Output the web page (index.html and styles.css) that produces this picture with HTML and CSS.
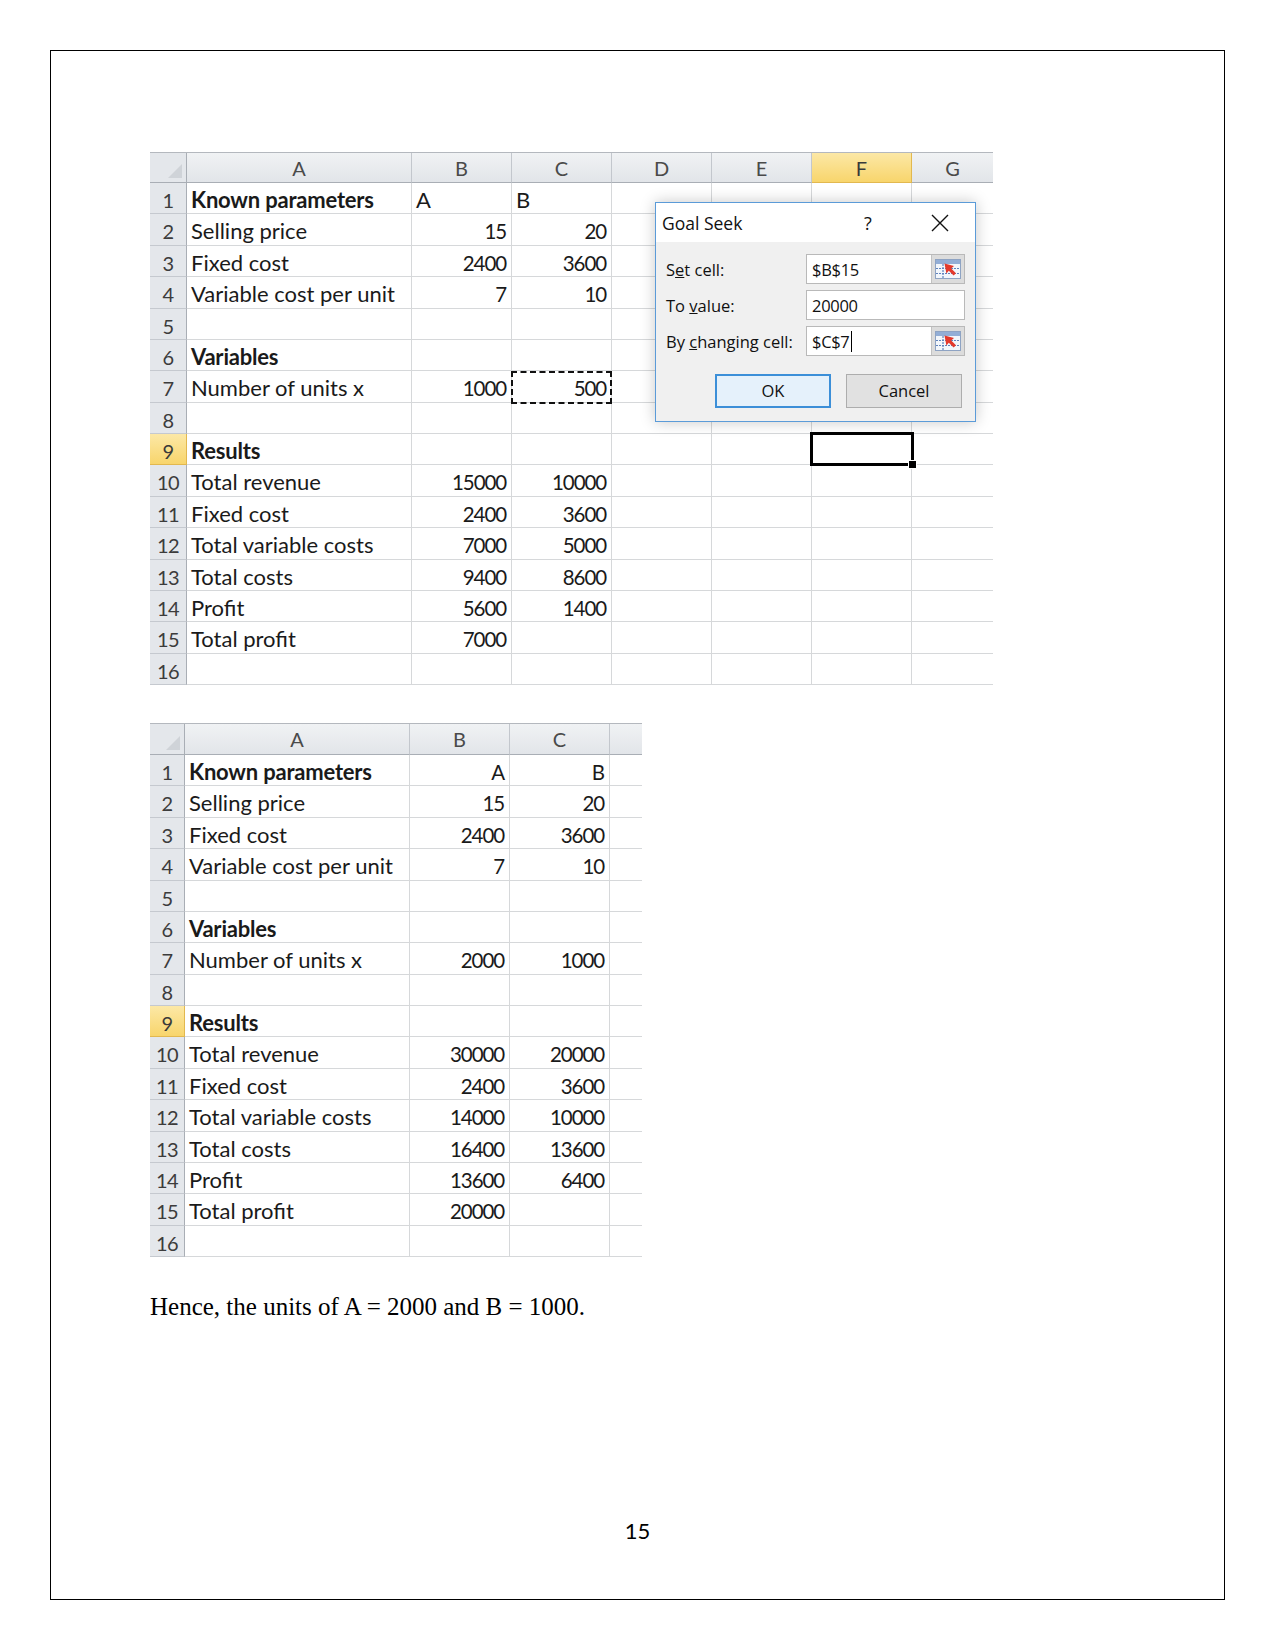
FILE: index.html
```html
<!DOCTYPE html>
<html>
<head>
<meta charset="utf-8">
<link rel="stylesheet" href="styles.css">
</head>
<body>
<div class="page">
  <div class="sheet sheet1">
    <div class="row hdr"><div class="c corner"></div><div class="c ch">A</div><div class="c ch">B</div><div class="c ch">C</div><div class="c ch">D</div><div class="c ch">E</div><div class="c ch sel">F</div><div class="c ch last">G</div></div>
    <div class="row"><div class="c rh">1</div><div class="c b">Known parameters</div><div class="c">A</div><div class="c">B</div><div class="c"></div><div class="c"></div><div class="c"></div><div class="c last"></div></div>
    <div class="row"><div class="c rh">2</div><div class="c">Selling price</div><div class="c num">15</div><div class="c num">20</div><div class="c"></div><div class="c"></div><div class="c"></div><div class="c last"></div></div>
    <div class="row"><div class="c rh">3</div><div class="c">Fixed cost</div><div class="c num">2400</div><div class="c num">3600</div><div class="c"></div><div class="c"></div><div class="c"></div><div class="c last"></div></div>
    <div class="row"><div class="c rh">4</div><div class="c">Variable cost per unit</div><div class="c num">7</div><div class="c num">10</div><div class="c"></div><div class="c"></div><div class="c"></div><div class="c last"></div></div>
    <div class="row"><div class="c rh">5</div><div class="c"></div><div class="c"></div><div class="c"></div><div class="c"></div><div class="c"></div><div class="c"></div><div class="c last"></div></div>
    <div class="row"><div class="c rh">6</div><div class="c b">Variables</div><div class="c"></div><div class="c"></div><div class="c"></div><div class="c"></div><div class="c"></div><div class="c last"></div></div>
    <div class="row"><div class="c rh">7</div><div class="c">Number of units x</div><div class="c num">1000</div><div class="c num">500</div><div class="c"></div><div class="c"></div><div class="c"></div><div class="c last"></div></div>
    <div class="row"><div class="c rh">8</div><div class="c"></div><div class="c"></div><div class="c"></div><div class="c"></div><div class="c"></div><div class="c"></div><div class="c last"></div></div>
    <div class="row"><div class="c rh sel">9</div><div class="c b">Results</div><div class="c"></div><div class="c"></div><div class="c"></div><div class="c"></div><div class="c"></div><div class="c last"></div></div>
    <div class="row"><div class="c rh">10</div><div class="c">Total revenue</div><div class="c num">15000</div><div class="c num">10000</div><div class="c"></div><div class="c"></div><div class="c"></div><div class="c last"></div></div>
    <div class="row"><div class="c rh">11</div><div class="c">Fixed cost</div><div class="c num">2400</div><div class="c num">3600</div><div class="c"></div><div class="c"></div><div class="c"></div><div class="c last"></div></div>
    <div class="row"><div class="c rh">12</div><div class="c">Total variable costs</div><div class="c num">7000</div><div class="c num">5000</div><div class="c"></div><div class="c"></div><div class="c"></div><div class="c last"></div></div>
    <div class="row"><div class="c rh">13</div><div class="c">Total costs</div><div class="c num">9400</div><div class="c num">8600</div><div class="c"></div><div class="c"></div><div class="c"></div><div class="c last"></div></div>
    <div class="row"><div class="c rh">14</div><div class="c">Profit</div><div class="c num">5600</div><div class="c num">1400</div><div class="c"></div><div class="c"></div><div class="c"></div><div class="c last"></div></div>
    <div class="row"><div class="c rh">15</div><div class="c">Total profit</div><div class="c num">7000</div><div class="c"></div><div class="c"></div><div class="c"></div><div class="c"></div><div class="c last"></div></div>
    <div class="row"><div class="c rh">16</div><div class="c"></div><div class="c"></div><div class="c"></div><div class="c"></div><div class="c"></div><div class="c"></div><div class="c last"></div></div>

    <div class="marquee"></div>
    <div class="active-cell"><span class="handle"></span></div>

    <div class="dialog">
      <div class="dlg-title">
        <span class="dlg-name">Goal Seek</span>
        <span class="dlg-help">?</span>
        <svg class="dlg-close" width="18" height="18" viewBox="0 0 18 18"><path d="M1 1 L17 17 M17 1 L1 17" stroke="#111" stroke-width="1.4" fill="none"/></svg>
      </div>
      <div class="dlg-body">
        <div class="field">
          <span class="lbl">S<u>e</u>t cell:</span>
          <div class="inp"><span class="val">$B$15</span>
            <span class="picker"><svg width="28" height="24" viewBox="0 0 28 24"><rect x="1.5" y="2.5" width="25" height="19" fill="#f2f6fb" stroke="#8ea3c3"/><rect x="2" y="3" width="24" height="4" fill="#93aed6"/><path d="M2 11.5 H26 M2 16.5 H26 M9 7 V21" stroke="#5f83bd" stroke-width="1.2" stroke-dasharray="2 1"/><path d="M10.5 6.5 L20 9 L17.2 11.4 L22 16.2 L19.6 18.6 L14.8 13.8 L12.4 16.4 Z" fill="#e3392c"/></svg></span>
          </div>
        </div>
        <div class="field">
          <span class="lbl">To <u>v</u>alue:</span>
          <div class="inp"><span class="val">20000</span></div>
        </div>
        <div class="field">
          <span class="lbl">By <u>c</u>hanging cell:</span>
          <div class="inp"><span class="val">$C$7<span class="caret"></span></span>
            <span class="picker"><svg width="28" height="24" viewBox="0 0 28 24"><rect x="1.5" y="2.5" width="25" height="19" fill="#f2f6fb" stroke="#8ea3c3"/><rect x="2" y="3" width="24" height="4" fill="#93aed6"/><path d="M2 11.5 H26 M2 16.5 H26 M9 7 V21" stroke="#5f83bd" stroke-width="1.2" stroke-dasharray="2 1"/><path d="M10.5 6.5 L20 9 L17.2 11.4 L22 16.2 L19.6 18.6 L14.8 13.8 L12.4 16.4 Z" fill="#e3392c"/></svg></span>
          </div>
        </div>
        <div class="buttons">
          <div class="btn ok">OK</div>
          <div class="btn">Cancel</div>
        </div>
      </div>
    </div>
  </div>

  <div class="sheet sheet2">
    <div class="row hdr"><div class="c corner"></div><div class="c ch">A</div><div class="c ch">B</div><div class="c ch">C</div><div class="c ch last"></div></div>
    <div class="row"><div class="c rh">1</div><div class="c b">Known parameters</div><div class="c num">A</div><div class="c num">B</div><div class="c last"></div></div>
    <div class="row"><div class="c rh">2</div><div class="c">Selling price</div><div class="c num">15</div><div class="c num">20</div><div class="c last"></div></div>
    <div class="row"><div class="c rh">3</div><div class="c">Fixed cost</div><div class="c num">2400</div><div class="c num">3600</div><div class="c last"></div></div>
    <div class="row"><div class="c rh">4</div><div class="c">Variable cost per unit</div><div class="c num">7</div><div class="c num">10</div><div class="c last"></div></div>
    <div class="row"><div class="c rh">5</div><div class="c"></div><div class="c"></div><div class="c"></div><div class="c last"></div></div>
    <div class="row"><div class="c rh">6</div><div class="c b">Variables</div><div class="c"></div><div class="c"></div><div class="c last"></div></div>
    <div class="row"><div class="c rh">7</div><div class="c">Number of units x</div><div class="c num">2000</div><div class="c num">1000</div><div class="c last"></div></div>
    <div class="row"><div class="c rh">8</div><div class="c"></div><div class="c"></div><div class="c"></div><div class="c last"></div></div>
    <div class="row"><div class="c rh sel">9</div><div class="c b">Results</div><div class="c"></div><div class="c"></div><div class="c last"></div></div>
    <div class="row"><div class="c rh">10</div><div class="c">Total revenue</div><div class="c num">30000</div><div class="c num">20000</div><div class="c last"></div></div>
    <div class="row"><div class="c rh">11</div><div class="c">Fixed cost</div><div class="c num">2400</div><div class="c num">3600</div><div class="c last"></div></div>
    <div class="row"><div class="c rh">12</div><div class="c">Total variable costs</div><div class="c num">14000</div><div class="c num">10000</div><div class="c last"></div></div>
    <div class="row"><div class="c rh">13</div><div class="c">Total costs</div><div class="c num">16400</div><div class="c num">13600</div><div class="c last"></div></div>
    <div class="row"><div class="c rh">14</div><div class="c">Profit</div><div class="c num">13600</div><div class="c num">6400</div><div class="c last"></div></div>
    <div class="row"><div class="c rh">15</div><div class="c">Total profit</div><div class="c num">20000</div><div class="c"></div><div class="c last"></div></div>
    <div class="row"><div class="c rh">16</div><div class="c"></div><div class="c"></div><div class="c"></div><div class="c last"></div></div>
  </div>

  <p class="conclusion">Hence, the units of A = 2000 and B = 1000.</p>

  <div class="page-num">15</div>
</div>
</body>
</html>
```

FILE: styles.css
```css
html, body {
  margin: 0;
  padding: 0;
  background: #fff;
}

.page {
  box-sizing: border-box;
  margin: 50px 0 0 50px;
  width: 1175px;
  height: 1550px;
  border: 1px solid #000;
  padding: 101px 0 0 99px;
}

.sheet {
  position: relative;
  font-family: Lato, "Liberation Sans", sans-serif;
  font-size: 22px;
  color: #1a1a1a;
}

.sheet1 {
  width: 843px;
  --cols: 37px 225px 100px 100px 100px 100px 100px 81px;
}

.sheet2 {
  width: 492px;
  margin-top: 38px;
  --cols: 35px 225px 100px 100px 32px;
}

.row {
  display: grid;
  grid-template-columns: var(--cols);
  height: 31.375px;
}

.row.hdr {
  height: 31px;
  box-sizing: border-box;
  border-top: 1px solid #b4b8be;
}

.sheet2 .row.hdr {
  height: 32px;
}

.c {
  box-sizing: border-box;
  border-right: 1px solid #d6d8da;
  border-bottom: 1px solid #d6d8da;
  padding: 1px 4px 0 4px;
  line-height: 31px;
  white-space: nowrap;
  overflow: hidden;
}

.c.last {
  border-right: none;
}

.c.num {
  text-align: right;
  font-size: 20.5px;
  letter-spacing: -1.1px;
  padding-right: 5px;
  padding-top: 2px;
}

.c.b {
  font-weight: 700;
  letter-spacing: -0.2px;
}

.c.rh {
  background: #e4e7eb;
  border-right: 1px solid #a9aeb5;
  border-bottom: 1px solid #c5c9cf;
  text-align: center;
  padding: 2px 0 0 0;
  font-size: 20px;
  letter-spacing: -0.6px;
  color: #3c3c3c;
}

.c.ch {
  background: linear-gradient(#f0f2f4, #e2e5e9);
  border-right: 1px solid #c3c7cd;
  border-bottom: 1px solid #a9aeb5;
  text-align: center;
  padding: 0;
  line-height: 30px;
  font-size: 20px;
  color: #4a4a4a;
}

.c.ch.last {
  border-right: none;
}

.c.corner {
  position: relative;
  background: #e4e7eb;
  border-right: 1px solid #a9aeb5;
  border-bottom: 1px solid #a9aeb5;
}

.c.corner::after {
  content: "";
  position: absolute;
  right: 4px;
  bottom: 4px;
  width: 14px;
  height: 14px;
  background: #cfd3d8;
  clip-path: polygon(100% 0, 100% 100%, 0 100%);
}

.c.sel {
  background: linear-gradient(#fce8a6, #f8d56c);
  border-right-color: #e2b84f;
  border-bottom-color: #e2b84f;
  color: #3a3a3a;
}

.marquee {
  position: absolute;
  left: 361px;
  top: 219px;
  width: 101px;
  height: 33px;
  box-sizing: border-box;
  border: 2px dashed #111;
}

.active-cell {
  position: absolute;
  left: 660px;
  top: 280px;
  width: 104px;
  height: 34px;
  box-sizing: border-box;
  border: 3px solid #000;
}

.active-cell .handle {
  position: absolute;
  right: -6px;
  bottom: -6px;
  width: 7px;
  height: 7px;
  background: #000;
  border: 1px solid #fff;
}

.dialog {
  position: absolute;
  left: 505px;
  top: 50px;
  width: 321px;
  box-sizing: border-box;
  border: 1px solid #5b9bd8;
  background: #f0f0f0;
  box-shadow: 0 0 14px rgba(0, 0, 0, 0.22);
  font-family: "Open Sans", "Noto Sans", sans-serif;
  font-size: 17px;
  color: #111;
}

.dlg-title {
  display: flex;
  align-items: center;
  height: 39px;
  background: #fff;
  padding: 0 0 0 6px;
}

.dlg-name {
  font-size: 17.5px;
  flex: 1;
}

.dlg-help {
  font-size: 18px;
  width: 20px;
  margin-right: 47px;
}

.dlg-close {
  margin-right: 26px;
}

.dlg-body {
  padding: 12px 10px 13px 9px;
}

.field {
  display: grid;
  grid-template-columns: 141px 159px;
  align-items: center;
  height: 30px;
  margin-bottom: 6px;
}

.field:nth-child(3) {
  margin-bottom: 0;
}

.lbl {
  padding-left: 1px;
  font-size: 16.5px;
}

.inp {
  display: flex;
  align-items: center;
  box-sizing: border-box;
  height: 30px;
  background: #fff;
  border: 1px solid #b9b9b9;
}

.val {
  flex: 1;
  padding-left: 5px;
  font-size: 16.5px;
  letter-spacing: -0.3px;
  display: flex;
  align-items: center;
}

.caret {
  display: inline-block;
  width: 1px;
  height: 21px;
  margin-left: 1px;
  background: #000;
}

.picker {
  display: flex;
  align-items: center;
  justify-content: center;
  width: 33px;
  height: 100%;
  box-sizing: border-box;
  background: #dcdcdc;
  border-left: 1px solid #c2c2c2;
}

.buttons {
  display: flex;
  justify-content: flex-end;
  gap: 15px;
  margin-top: 18px;
  padding-right: 3px;
}

.btn {
  box-sizing: border-box;
  width: 116px;
  height: 34px;
  line-height: 32px;
  text-align: center;
  background: #e1e1e1;
  border: 1px solid #adadad;
  font-size: 16.5px;
}

.btn.ok {
  background: #e5f1fb;
  border: 2px solid #3c8fd8;
  line-height: 30px;
}

.conclusion {
  margin: 36px 0 0 0;
  font-family: "Liberation Serif", "Times New Roman", serif;
  font-size: 25px;
  color: #000;
}

.page-num {
  margin: 196px 0 0 -99px;
  width: 1173px;
  text-align: center;
  font-family: Lato, "Liberation Sans", sans-serif;
  font-size: 22px;
  color: #000;
}
```
